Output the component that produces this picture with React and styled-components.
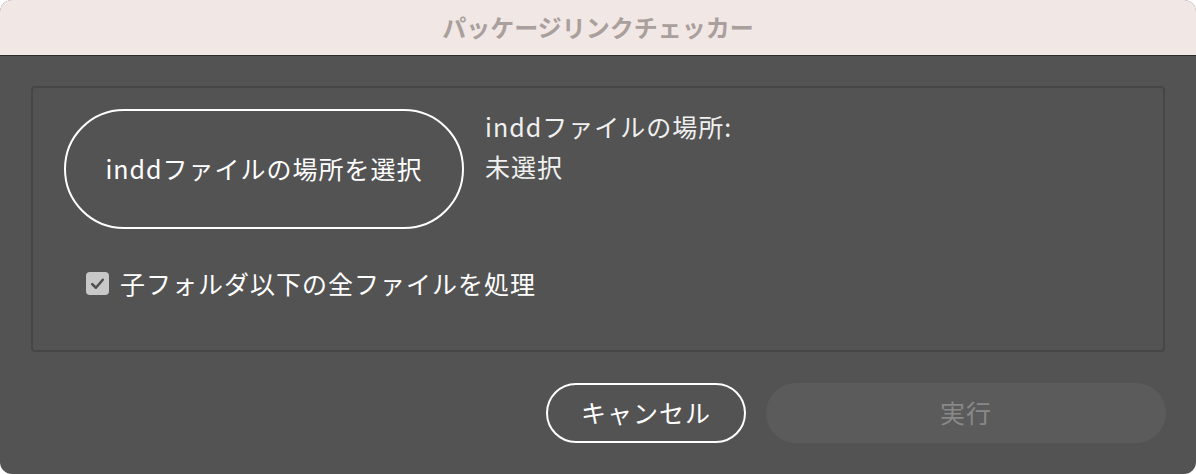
import styled, { createGlobalStyle } from "styled-components";

const GlobalStyle = createGlobalStyle`
  html, body {
    margin: 0;
    padding: 0;
    background: #ffffff;
  }
  body {
    font-family: "Noto Sans CJK JP", "Noto Sans", sans-serif;
  }
`;

const Window = styled.div`
  width: 1196px;
  height: 474px;
  border-radius: 12px;
  overflow: hidden;
  display: flex;
  flex-direction: column;
  background: #535353;
`;

const TitleBar = styled.header`
  height: 56px;
  flex: none;
  box-sizing: border-box;
  padding-bottom: 3px;
  background: #f1e7e4;
  border-bottom: 1px solid #2c2c2c;
  display: flex;
  align-items: center;
  justify-content: center;
  font-size: 24px;
  font-weight: 700;
  color: #a99f9d;
`;

const Body = styled.main`
  flex: 1;
  display: flex;
  flex-direction: column;
  padding: 30px 30px 30px 31px;
  gap: 31px;
`;

const Panel = styled.section`
  height: 266px;
  box-sizing: border-box;
  margin-right: 1px;
  border: 2px solid #464646;
  border-radius: 4px;
  padding: 21px 31px;
  display: flex;
  flex-direction: column;
  gap: 36px;
`;

const PickRow = styled.div`
  display: flex;
  align-items: flex-start;
  gap: 21px;
`;

const PillButton = styled.button`
  box-sizing: border-box;
  width: ${(p) => p.$width}px;
  height: ${(p) => p.$height}px;
  border-radius: 999px;
  border: 2px solid ${(p) => (p.$disabled ? "transparent" : "#ffffff")};
  background: ${(p) => (p.$disabled ? "#5b5b5b" : "transparent")};
  color: ${(p) => (p.$disabled ? "#898989" : "#ffffff")};
  font-family: inherit;
  font-size: 25px;
  font-weight: 400;
  letter-spacing: 1px;
  display: flex;
  align-items: center;
  justify-content: center;
  padding: 0 0 2px;
  cursor: default;
`;

const Location = styled.div`
  display: flex;
  flex-direction: column;
  margin-top: -3px;
  color: #f0f0f0;
  font-size: 25px;
  letter-spacing: 1px;
  line-height: 40px;
`;

const CheckRow = styled.label`
  display: flex;
  align-items: center;
  gap: 11px;
  padding-left: 22px;
  color: #ffffff;
  font-size: 25px;
  letter-spacing: 1px;
`;

const CheckBox = styled.span`
  width: 23px;
  height: 23px;
  flex: none;
  border-radius: 4px;
  background: #c8c8c8;
  display: flex;
  align-items: center;
  justify-content: center;
`;

const Footer = styled.footer`
  display: flex;
  justify-content: flex-end;
  gap: 20px;
`;

export default function App() {
  return (
    <>
      <GlobalStyle />
      <Window>
        <TitleBar>パッケージリンクチェッカー</TitleBar>
        <Body>
          <Panel>
            <PickRow>
              <PillButton $width={400} $height={120}>
                inddファイルの場所を選択
              </PillButton>
              <Location>
                <span>inddファイルの場所:</span>
                <span>未選択</span>
              </Location>
            </PickRow>
            <CheckRow>
              <CheckBox>
                <svg width="17" height="17" viewBox="0 0 16 16">
                  <path
                    d="M3 8.5 L6.5 12 L13 4.5"
                    fill="none"
                    stroke="#505050"
                    strokeWidth="2.4"
                    strokeLinecap="round"
                    strokeLinejoin="round"
                  />
                </svg>
              </CheckBox>
              子フォルダ以下の全ファイルを処理
            </CheckRow>
          </Panel>
          <Footer>
            <PillButton $width={200} $height={60}>
              キャンセル
            </PillButton>
            <PillButton $width={400} $height={60} $disabled>
              実行
            </PillButton>
          </Footer>
        </Body>
      </Window>
    </>
  );
}
